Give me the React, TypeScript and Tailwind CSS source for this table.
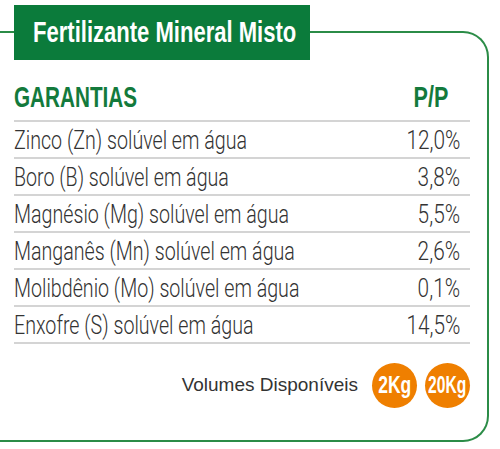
const rows = [
  { name: "Zinco (Zn) solúvel em água", value: "12,0%" },
  { name: "Boro (B) solúvel em água", value: "3,8%" },
  { name: "Magnésio (Mg) solúvel em água", value: "5,5%" },
  { name: "Manganês (Mn) solúvel em água", value: "2,6%" },
  { name: "Molibdênio (Mo) solúvel em água", value: "0,1%" },
  { name: "Enxofre (S) solúvel em água", value: "14,5%" },
];

export default function App() {
  return (
    <div className="w-[500px] h-[449px] bg-white overflow-hidden pt-[5px] font-['Liberation_Sans',Arial,sans-serif]">
      {/* Title tab */}
      <div className="relative z-10 ml-[14px] w-[296px] h-[55px] bg-[#0b7b3b] flex items-center pl-[19px] text-white text-[29px] font-bold leading-none">
        <span className="inline-block whitespace-nowrap origin-left scale-x-[0.76]">
          Fertilizante Mineral Misto
        </span>
      </div>

      {/* Frame */}
      <div className="-mt-[29px] mr-[11px] h-[411px] border-t-2 border-r-2 border-b-2 border-[#2b8c47] rounded-r-[26px] pl-[14px] pr-[17px]">
        <div className="flex items-end justify-between h-[87px] pb-[8px] pr-[22px] text-[#137a3c] text-[30px] font-bold leading-none">
          <span className="inline-block whitespace-nowrap origin-left scale-x-[0.69]">GARANTIAS</span>
          <span className="inline-block whitespace-nowrap origin-right scale-x-[0.72]">P/P</span>
        </div>

        <div className="border-t-2 border-[#d4d4d4]">
          {rows.map((r) => (
            <div
              key={r.name}
              className="flex items-center justify-between h-[37px] border-b-2 border-[#d4d4d4] pr-[10px] text-[#333] text-[26px] font-light leading-none font-['Roboto',sans-serif]"
            >
              <span className="inline-block whitespace-nowrap origin-left scale-x-[0.756]">{r.name}</span>
              <span className="inline-block whitespace-nowrap origin-right scale-x-[0.8]">{r.value}</span>
            </div>
          ))}
        </div>

        <div className="flex items-center justify-end gap-[8px] mt-[19px]">
          <span className="text-[#333] text-[19px] mr-[6px]">Volumes Disponíveis</span>
          <div className="w-[45px] h-[45px] rounded-full bg-[#ef7f00] flex items-center justify-center text-white text-[23px] font-bold leading-none">
            <span className="inline-block whitespace-nowrap scale-x-[0.76]">2Kg</span>
          </div>
          <div className="w-[45px] h-[45px] rounded-full bg-[#ef7f00] flex items-center justify-center text-white text-[23px] font-bold leading-none">
            <span className="inline-block whitespace-nowrap scale-x-[0.68]">20Kg</span>
          </div>
        </div>
      </div>
    </div>
  );
}
